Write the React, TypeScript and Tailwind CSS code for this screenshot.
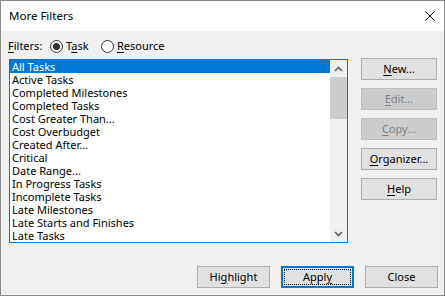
import React from "react";

const filters = [
  "All Tasks",
  "Active Tasks",
  "Completed Milestones",
  "Completed Tasks",
  "Cost Greater Than...",
  "Cost Overbudget",
  "Created After...",
  "Critical",
  "Date Range...",
  "In Progress Tasks",
  "Incomplete Tasks",
  "Late Milestones",
  "Late Starts and Finishes",
  "Late Tasks",
];

function Radio({ checked }: { checked?: boolean }) {
  return (
    <span className="flex h-[13px] w-[13px] items-center justify-center rounded-full border border-[#333333] bg-white">
      {checked && <span className="h-[7px] w-[7px] rounded-full bg-[#333333]" />}
    </span>
  );
}

function SideButton({ key1, post, disabled }: { key1: string; post: string; disabled?: boolean }) {
  return (
    <button
      className={
        "flex h-[22px] w-[76px] items-center justify-center border text-[11px] " +
        (disabled
          ? "border-[#bfbfbf] bg-[#cccccc] text-[#838383]"
          : "border-[#adadad] bg-[#e1e1e1] text-black")
      }
    >
      <span>
        <u className="underline-offset-[2px]">{key1}</u>
        {post}
      </span>
    </button>
  );
}

function Chevron({ up }: { up?: boolean }) {
  return (
    <svg width="9" height="6" viewBox="0 0 9 6">
      <path
        d={up ? "M1 5 L4.5 1.5 L8 5" : "M1 1 L4.5 4.5 L8 1"}
        fill="none"
        stroke="#606060"
        strokeWidth="1.7"
      />
    </svg>
  );
}

export default function App() {
  return (
    <div className="flex h-[296px] w-[445px] flex-col border border-[#8a8a8a] bg-[#f0f0f0] font-['Noto_Sans',sans-serif] text-[11px] text-black">
      <div className="flex h-[30px] items-center justify-between bg-white pl-[8px] pr-[9px]">
        <span className="text-[11.5px]">More Filters</span>
        <svg width="10" height="10" viewBox="0 0 10 10">
          <path d="M0.5 0.5 L9.5 9.5 M9.5 0.5 L0.5 9.5" stroke="#000" strokeWidth="1" />
        </svg>
      </div>

      <div className="flex h-[28px] items-center pl-[7px] pt-[2px]">
        <span className="w-[42px]">
          <u className="underline-offset-[2px]">F</u>ilters:
        </span>
        <Radio checked />
        <span className="ml-[3px] w-[35px]">
          T<u className="underline-offset-[2px]">a</u>sk
        </span>
        <Radio />
        <span className="ml-[3px]">
          <u className="underline-offset-[2px]">R</u>esource
        </span>
      </div>

      <div className="flex gap-[13px] pl-[8px]">
        <div className="flex h-[184px] w-[339px] border border-[#0078d7] bg-white">
          <div className="flex flex-1 flex-col overflow-hidden">
            {filters.map((f, i) => (
              <div
                key={f}
                className={
                  "h-[13px] shrink-0 whitespace-nowrap pl-[2px] leading-[13px] " +
                  (i === 0 ? "bg-[#0078d7] text-white" : "")
                }
              >
                {f}
              </div>
            ))}
          </div>
          <div className="flex w-[17px] flex-col bg-[#f0f0f0]">
            <div className="flex h-[17px] items-center justify-center">
              <Chevron up />
            </div>
            <div className="h-[42px] bg-[#cdcdcd]" />
            <div className="flex-1" />
            <div className="flex h-[17px] items-center justify-center">
              <Chevron />
            </div>
          </div>
        </div>

        <div className="-mt-[1px] flex flex-col gap-[8px]">
          <SideButton key1="N" post="ew..." />
          <SideButton key1="E" post="dit..." disabled />
          <SideButton key1="C" post="opy..." disabled />
          <SideButton key1="O" post="rganizer..." />
          <SideButton key1="H" post="elp" />
        </div>
      </div>

      <div className="mt-auto mb-[7px] flex justify-end gap-[11px] pr-[6px]">
        <button className="flex h-[22px] w-[73px] items-center justify-center border border-[#adadad] bg-[#e1e1e1]">
          <span>
            Hi<u className="underline-offset-[2px]">g</u>hlight
          </span>
        </button>
        <button className="relative flex h-[22px] w-[73px] items-center justify-center border-2 border-[#0078d7] bg-[#e1e1e1]">
          <span className="absolute inset-[1px] border border-dotted border-black" />
          <span>
            Appl<u className="underline-offset-[2px]">y</u>
          </span>
        </button>
        <button className="flex h-[22px] w-[73px] items-center justify-center border border-[#adadad] bg-[#e1e1e1]">
          Close
        </button>
      </div>
    </div>
  );
}
